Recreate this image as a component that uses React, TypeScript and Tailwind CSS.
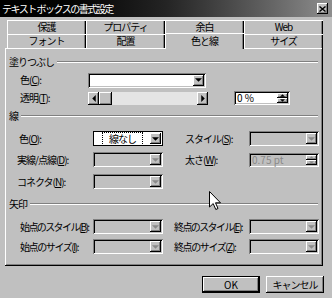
import React from 'react'

const raised = 'shadow-[inset_-1px_-1px_#000,inset_1px_1px_#fff,inset_-2px_-2px_#808080]'
const sunken = 'shadow-[inset_1px_1px_#808080,inset_-1px_-1px_#fff,inset_2px_2px_#000,inset_-2px_-2px_#c0c0c0]'

function Arrow({ dir, gray }: { dir: 'down' | 'up' | 'left' | 'right'; gray?: boolean }) {
  const pts = {
    down: '0,0 6,0 3,3',
    up: '0,3 6,3 3,0',
    left: '3,0 3,6 0,3',
    right: '0,0 0,6 3,3',
  }[dir]
  const box = dir === 'down' || dir === 'up' ? { w: 7, h: 4 } : { w: 4, h: 7 }
  return (
    <svg width={box.w} height={box.h} viewBox={`0 0 ${box.w - 1} ${box.h - 1}`} className="shrink-0">
      <polygon points={pts} fill={gray ? '#8a8a8a' : '#000'} />
    </svg>
  )
}

function DropBtn({ gray }: { gray?: boolean }) {
  return (
    <div className={`${raised} w-[11px] h-full bg-[#c0c0c0] flex items-center justify-center`}>
      <Arrow dir="down" gray={gray} />
    </div>
  )
}

function Combo({ w, white, children }: { w: string; white?: boolean; children?: React.ReactNode }) {
  return (
    <div className={`${sunken} ${w} h-[15px] p-[2px] flex shrink-0 ${white ? 'bg-white' : 'bg-[#c0c0c0]'}`}>
      <div className="flex-1 flex items-center pl-[2px]">{children}</div>
      <DropBtn gray={!white} />
    </div>
  )
}

function Spinner({ w, white, children }: { w: string; white?: boolean; children?: React.ReactNode }) {
  return (
    <div className={`${sunken} ${w} h-[14px] p-[2px] flex shrink-0 ${white ? 'bg-white' : 'bg-[#c0c0c0]'}`}>
      <div className="flex-1 flex items-center pl-[1px] whitespace-nowrap">{children}</div>
      <div className="w-[11px] flex flex-col">
        <div className={`${raised} flex-1 bg-[#c0c0c0] flex items-center justify-center`}>
          <svg width="5" height="3" viewBox="0 0 4 2"><polygon points="0,2 4,2 2,0" fill={white ? '#000' : '#8a8a8a'} /></svg>
        </div>
        <div className={`${raised} flex-1 bg-[#c0c0c0] flex items-center justify-center`}>
          <svg width="5" height="3" viewBox="0 0 4 2"><polygon points="0,0 4,0 2,2" fill={white ? '#000' : '#8a8a8a'} /></svg>
        </div>
      </div>
    </div>
  )
}

function Group({ title, first }: { title: string; first?: boolean }) {
  return (
    <div className={`flex items-center h-[10px] pl-[4px] pr-[4px] ${first ? 'mt-[9px]' : 'mt-[6px]'}`}>
      <span className="whitespace-nowrap">{title}</span>
      <div className="flex-1 ml-[3px] h-[2px] border-t border-t-[#808080] border-b border-b-white" />
    </div>
  )
}

function Tab({ label, selected }: { label: string; selected?: boolean }) {
  return (
    <div
      className={`w-[79px] flex items-center justify-center bg-[#c0c0c0] shadow-[inset_1px_1px_#fff,inset_-1px_0_#000,inset_-2px_0_#808080] ${
        selected ? 'relative z-10 h-[16px] -mt-[1px]' : 'h-[14px]'
      }`}
    >
      {label}
    </div>
  )
}

export default function App() {
  return (
    <div className="w-[332px] h-[298px] bg-[#c0c0c0] relative overflow-hidden font-['Noto_Sans_CJK_JP',sans-serif] text-[10px] leading-none text-black tracking-[-1px]">
      {/* title bar */}
      <div className="h-[17px] bg-linear-to-r from-black via-[#242424] to-[#8e8e8e] flex items-center pl-[2px] pr-[4px]">
        <span className="text-white text-[10px] tracking-[-1.5px] flex-1">テキスト ボックスの書式設定</span>
        <div className={`${raised} w-[11px] h-[11px] bg-[#c0c0c0] flex items-center justify-center`}>
          <svg width="7" height="6" viewBox="0 0 7 6">
            <path d="M0.5 0.5L6.5 5.5M6.5 0.5L0.5 5.5" stroke="#000" strokeWidth="1.4" />
          </svg>
        </div>
      </div>

      {/* tabs */}
      <div className="mt-[3px] pl-[7px]">
        <div className="flex h-[14px]">
          <Tab label="保護" />
          <Tab label="プロパティ" />
          <Tab label="余白" />
          <Tab label="Web" />
        </div>
        <div className="flex h-[14px]">
          <Tab label="フォント" />
          <Tab label="配置" />
          <Tab label="色と線" selected />
          <Tab label="サイズ" />
        </div>
      </div>

      {/* panel */}
      <div className={`${raised} ml-[5px] w-[318px] h-[218px] flex flex-col pr-[1px]`}>
        <Group title="塗りつぶし" first />
        <div className="flex items-center h-[14px] mt-[6px] pl-[15px]">
          <span className="w-[68px] whitespace-nowrap">色(<u>C</u>):</span>
          <Combo w="w-[118px]" white />
        </div>
        <div className="flex items-center h-[14px] mt-[4px] pl-[15px]">
          <span className="w-[68px] whitespace-nowrap">透明(<u>T</u>):</span>
          <div className="w-[120px] h-[13px] flex bg-[#e4e4e4]">
            <div className={`${raised} w-[11px] bg-[#c0c0c0] flex items-center justify-center`}>
              <Arrow dir="left" />
            </div>
            <div className={`${raised} w-[13px] bg-[#c0c0c0]`} />
            <div className="flex-1" />
            <div className={`${raised} w-[11px] bg-[#c0c0c0] flex items-center justify-center`}>
              <Arrow dir="right" />
            </div>
          </div>
          <div className="w-[26px]" />
          <Spinner w="w-[56px]" white>
            <span className="tracking-normal">0 %</span>
          </Spinner>
        </div>

        <Group title="線" />
        <div className="flex items-center h-[15px] mt-[10px] pl-[14px]">
          <span className="w-[74px] whitespace-nowrap">色(<u>O</u>):</span>
          <div className="w-[70px] h-[15px] border border-black bg-white flex p-[1px]">
            <div className="flex-1 flex items-center justify-center">
              <span className="outline-1 outline-dotted outline-black px-[6px] py-[1px]">線なし</span>
            </div>
            <DropBtn />
          </div>
          <div className="w-[22px]" />
          <span className="w-[64px] whitespace-nowrap">スタイル(<u>S</u>):</span>
          <Combo w="w-[70px]" />
        </div>
        <div className="flex items-center h-[15px] mt-[6px] pl-[12px]">
          <span className="w-[76px] whitespace-nowrap">実線/点線(<u>D</u>):</span>
          <Combo w="w-[70px]" />
          <div className="w-[22px]" />
          <span className="w-[64px] whitespace-nowrap">太さ(<u>W</u>):</span>
          <Spinner w="w-[70px]">
            <span className="text-[#8a8a8a] tracking-normal">0.75 pt</span>
          </Spinner>
        </div>
        <div className="flex items-center h-[15px] mt-[7px] pl-[12px]">
          <span className="w-[76px] whitespace-nowrap">コネクタ(<u>N</u>):</span>
          <Combo w="w-[70px]" />
        </div>

        <div className="mt-[4px]">
          <Group title="矢印" />
        </div>
        <div className="flex items-center h-[15px] mt-[10px] pl-[15px]">
          <span className="w-[73px] whitespace-nowrap tracking-[-1.6px]">始点のスタイル(<u>B</u>):</span>
          <Combo w="w-[70px]" />
          <div className="w-[11px]" />
          <span className="w-[75px] whitespace-nowrap tracking-[-1.6px]">終点のスタイル(<u>E</u>):</span>
          <Combo w="w-[70px]" />
        </div>
        <div className="flex items-center h-[15px] mt-[5px] pl-[15px]">
          <span className="w-[73px] whitespace-nowrap tracking-[-1.4px]">始点のサイズ(<u>I</u>):</span>
          <Combo w="w-[70px]" />
          <div className="w-[11px]" />
          <span className="w-[75px] whitespace-nowrap tracking-[-1.4px]">終点のサイズ(<u>Z</u>):</span>
          <Combo w="w-[70px]" />
        </div>
      </div>

      {/* buttons */}
      <div className="flex justify-end gap-[6px] pr-[8px] mt-[10px]">
        <div className="w-[58px] h-[17px] border border-black">
          <div className={`${raised} w-full h-full flex items-center justify-center tracking-normal`}>OK</div>
        </div>
        <div className={`${raised} w-[58px] h-[17px] flex items-center justify-center`}>キャンセル</div>
      </div>

      {/* mouse cursor */}
      <svg className="absolute left-[209px] top-[191px]" width="13" height="20" viewBox="0 0 13 20">
        <path d="M0.5 0.5V16L4.2 12.6L6.8 18.5L9 17.5L6.5 11.8H11.5Z" fill="#fff" stroke="#000" strokeWidth="1" strokeLinejoin="round" />
      </svg>
    </div>
  )
}
